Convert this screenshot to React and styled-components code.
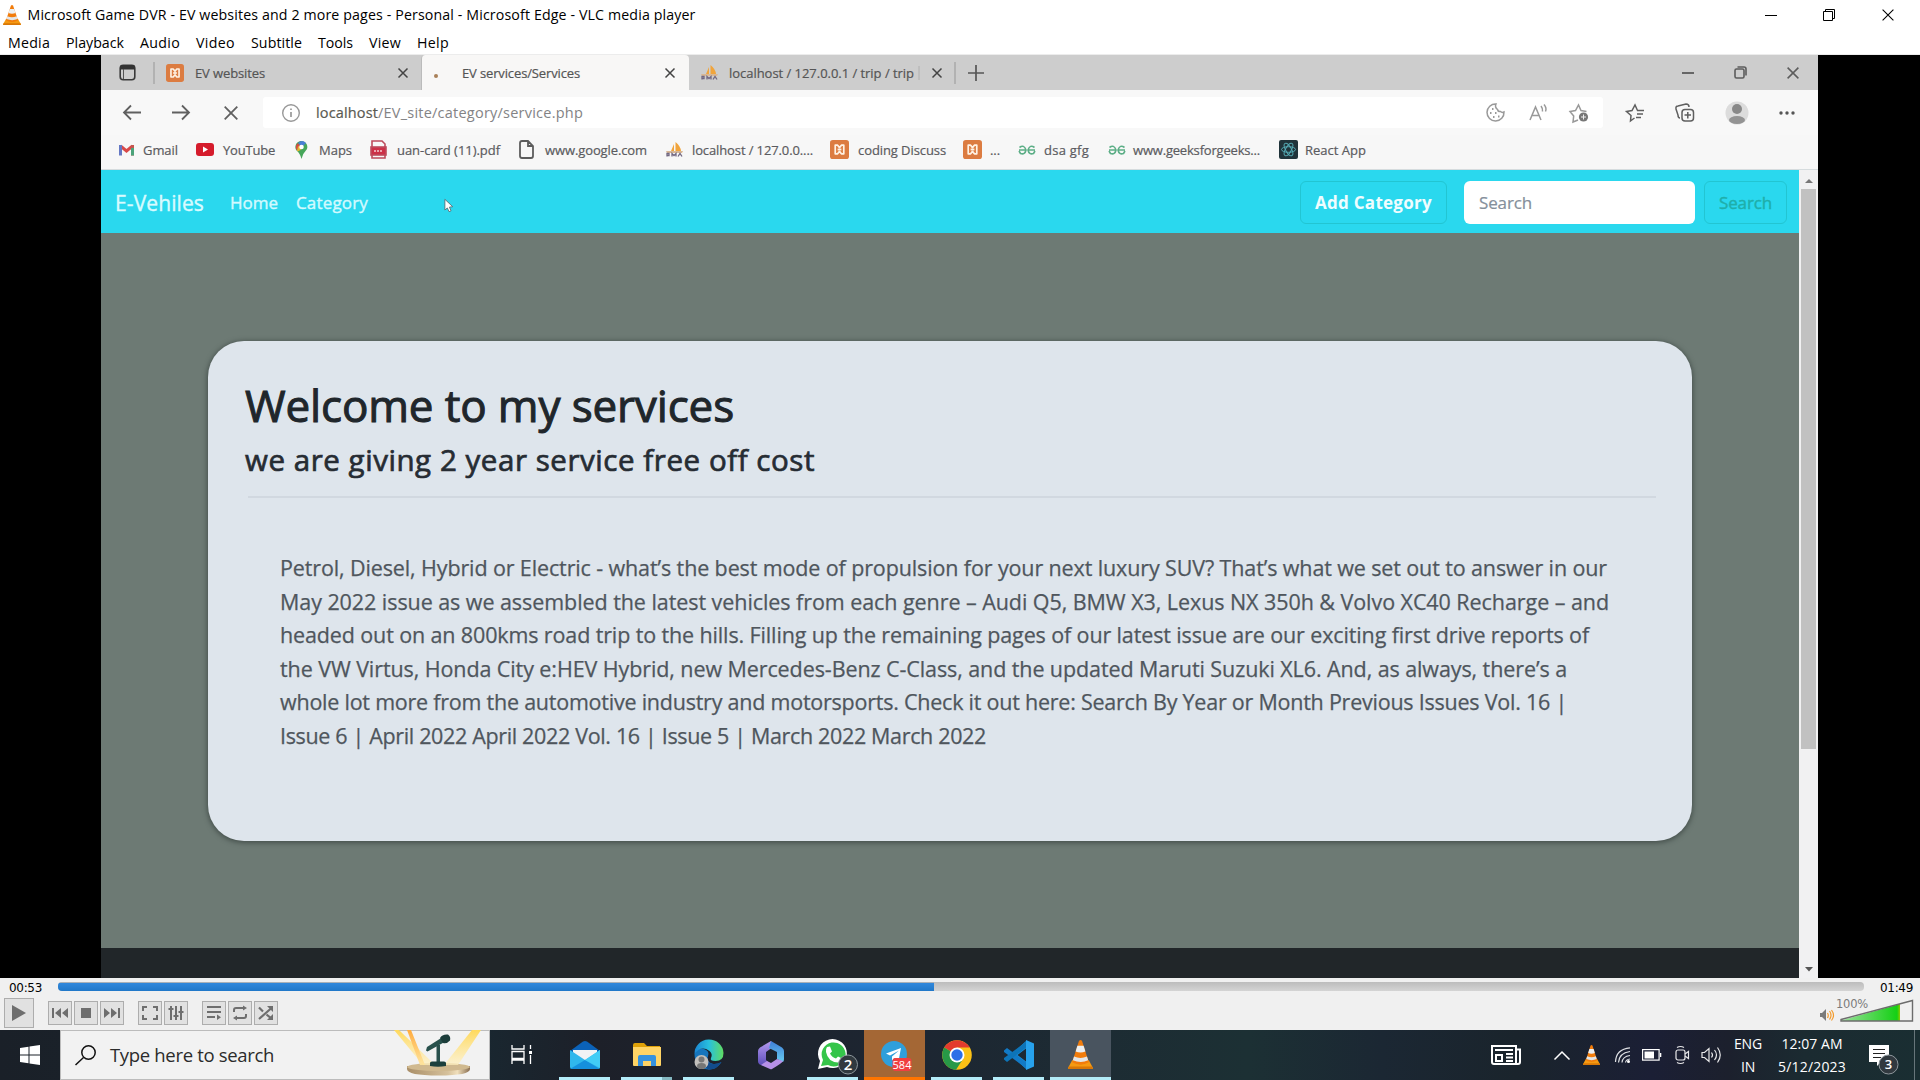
import React, { useLayoutEffect, useRef, useState } from "react";
import styled, { createGlobalStyle } from "styled-components";

const GlobalStyle = createGlobalStyle`
  * { box-sizing: border-box; }
  body { margin: 0; background: #000; font-family: "Open Sans", "Noto Sans", sans-serif; }
  svg { display: block; overflow: visible; flex: none; }
`;

/* ---------- shared parts ---------- */

const Label = styled.span`
  display: block;
  flex: none;
  width: ${(p) => p.$w}px;
  font-family: ${(p) => p.$font || "inherit"};
  font-size: ${(p) => p.$size}px;
  font-weight: ${(p) => p.$weight || 400};
  line-height: ${(p) => p.$lh || "20px"};
  color: ${(p) => p.$color || "#000"};
  -webkit-text-stroke: ${(p) => p.$stroke || 0}px currentColor;
  white-space: pre;
`;

/* A single line whose tracking is adjusted so that it fills its given width. */
function Fit({ w, children, ...rest }) {
  const ref = useRef(null);
  const [tracking, setTracking] = useState(0);
  useLayoutEffect(() => {
    const el = ref.current;
    const natural = el.getBoundingClientRect().width;
    const count = el.textContent.length;
    setTracking((w - natural) / count);
  }, [w]);
  return (
    <Label $w={w} {...rest}>
      <span ref={ref} style={{ letterSpacing: `${tracking}px` }}>{children}</span>
    </Label>
  );
}

const Slot = styled.div`
  display: flex;
  align-items: center;
  flex: none;
  width: ${(p) => p.$w}px;
  height: 100%;
`;

const Spacer = styled.div`
  flex: 1;
`;

/* ---------- player window ---------- */

const Window = styled.div`
  display: flex;
  flex-direction: column;
  width: 1920px;
  height: 1080px;
  overflow: hidden;
`;

const TitleBar = styled.header`
  display: flex;
  align-items: center;
  height: 30px;
  padding-left: 3px;
  background: #fff;
`;

const MenuBar = styled.nav`
  display: flex;
  align-items: center;
  height: 25px;
  padding: 2px 0 0 8px;
  background: #fff;
  border-bottom: 1px solid #ececec;
`;

const VideoArea = styled.main`
  display: flex;
  height: 923px;
  padding: 0 102px 0 101px;
  background: #000;
`;

const Frame = styled.section`
  display: flex;
  flex-direction: column;
  width: 1717px;
  height: 923px;
  background: #f7f8f8;
`;

/* ---------- browser chrome ---------- */

const TabStrip = styled.div`
  display: flex;
  height: 35px;
  background: #cdcdcd;
`;

const TabGroup = styled.div`
  display: flex;
  align-items: center;
  flex: none;
  width: ${(p) => p.$w}px;
  padding-left: ${(p) => p.$pad}px;
  background: ${(p) => (p.$active ? "#f8f7f6" : "transparent")};
  border-left: ${(p) => (p.$active ? "1px solid #bbb" : "0")};
  border-radius: ${(p) => (p.$active ? "4px 4px 0 0" : "0")};
`;

const TabDivider = styled.div`
  width: 2px;
  height: 22px;
  background: #b2b2b2;
`;

const AddressRow = styled.div`
  display: flex;
  align-items: center;
  height: 45px;
  padding-left: 22px;
  background: #f8f8f8;
`;

const AddressField = styled.div`
  display: flex;
  align-items: center;
  width: 1340px;
  height: 31px;
  padding-left: 19px;
  border-radius: 3px;
  background: #fff;
`;

const BookmarkRow = styled.div`
  display: flex;
  align-items: center;
  height: 35px;
  padding: 0 0 5px 16px;
  background: #f7f7f7;
  border-bottom: 1px solid #d6dcde;
`;

/* ---------- web page ---------- */

const Viewport = styled.div`
  display: flex;
  height: 808px;
`;

const Page = styled.div`
  display: flex;
  flex-direction: column;
  width: 1698px;
  background: #6d7a74;
`;

const Navbar = styled.div`
  display: flex;
  align-items: center;
  height: 63px;
  padding: 2px 12px 0 14px;
  background: #2ad8ee;
`;

const OutlineButton = styled.div`
  display: flex;
  align-items: center;
  justify-content: center;
  flex: none;
  width: ${(p) => p.$w}px;
  height: 43px;
  margin-right: ${(p) => p.$mr || 0}px;
  border: 1.5px solid #22c5d2;
  border-radius: 6px;
`;

const SearchInput = styled.div`
  display: flex;
  align-items: center;
  width: 231px;
  height: 43px;
  margin-right: 9px;
  padding-left: 15px;
  border-radius: 6px;
  background: #fff;
`;

const Body = styled.div`
  height: 715px;
  padding: 108px 0 0 107px;
`;

const Card = styled.article`
  width: 1484px;
  height: 500px;
  padding: 37px 36px 0 37px;
  border-radius: 36px;
  background: #dee5ec;
  box-shadow: 0 1px 5px 1px #46514d;
`;

const Rule = styled.div`
  height: 2px;
  margin: 9px 0 53px 3px;
  background: #d1d8e0;
`;

const Copy = styled.div`
  padding-left: 35px;
`;

const PageFooter = styled.div`
  flex: 1;
  background: #212629;
`;

const ScrollTrack = styled.div`
  display: flex;
  flex-direction: column;
  align-items: center;
  width: 19px;
  height: 808px;
  padding: 7px 0 6px;
  background: #f1f1f2;
`;

const ScrollThumb = styled.div`
  width: 15px;
  height: 560px;
  margin: 6px 0 auto;
  background: #c1c1c1;
`;

/* ---------- player controls ---------- */

const SeekRow = styled.div`
  display: flex;
  align-items: center;
  height: 19px;
  padding-left: 9px;
  background: #f0f0f0;
`;

const SeekBar = styled.div`
  width: 1806px;
  height: 9px;
  margin: 0 16px 2px;
  border-radius: 4px;
  overflow: hidden;
  background: linear-gradient(#bcbcbc, #d4d4d4);
`;

const SeekFill = styled.div`
  width: 876px;
  height: 9px;
  border-top: 1px solid #a9b0b7;
  background: linear-gradient(#3088dc, #2178c8);
`;

const ControlRow = styled.div`
  display: flex;
  align-items: center;
  height: 33px;
  padding: 0 6px 1px 4px;
  background: #f0f0f0;
`;

const ControlButton = styled.div`
  display: flex;
  align-items: center;
  justify-content: center;
  width: ${(p) => p.$size || 24}px;
  height: ${(p) => p.$size || 24}px;
  margin-right: ${(p) => p.$mr || 2}px;
  border: 1px solid #adadad;
  background: #e1e1e1;
`;

const VolumeBox = styled.div`
  position: relative;
  width: 94px;
  height: 28px;
`;

const VolumeText = styled.div`
  position: absolute;
  left: 16px;
  top: -2px;
`;

/* ---------- taskbar ---------- */

const Taskbar = styled.footer`
  display: flex;
  height: 50px;
  background: linear-gradient(90deg, #1a2028 0%, #192730 25%, #1d2029 31%, #1d2632 48%, #1c3034 65%, #1b2733 72%, #1a242c 79%, #1b1f35 86%, #1c202d 90%, #1b2b31 94%, #1a2e32 100%);
`;

const StartButton = styled.div`
  display: flex;
  align-items: center;
  justify-content: center;
  width: 60px;
`;

const SearchBox = styled.div`
  display: flex;
  align-items: center;
  width: 430px;
  padding-left: 14px;
  border: 1px solid #bcbcbc;
  background: #f2f2f2;
`;

const SearchArt = styled.div`
  align-self: flex-start;
  margin-left: 122px;
`;

const TaskList = styled.div`
  display: flex;
  margin-left: 1px;
`;

const TaskButton = styled.div`
  display: flex;
  flex-direction: column;
  align-items: center;
  justify-content: space-between;
  width: ${(p) => p.$w || 62}px;
  height: 50px;
  padding-top: 10px;
  border-right: 1px solid transparent;
  background: ${(p) => p.$bg || "transparent"};
  background-clip: padding-box;
`;

const Underline = styled.div`
  width: ${(p) => p.$w || 51}px;
  height: 3px;
  background: ${(p) => p.$color || "#b3ecf9"};
  border-right: ${(p) => (p.$stack ? "10px solid #84b8c1" : "0")};
`;

const TrayStack = styled.div`
  display: flex;
  flex-direction: column;
  align-items: center;
  justify-content: space-between;
  flex: none;
  width: ${(p) => p.$w}px;
  margin-right: ${(p) => p.$mr}px;
  height: 50px;
  padding: 4px 0 3px;
`;

const ShowDesktop = styled.div`
  width: 6px;
  height: 50px;
  border-left: 1px solid #67757a;
`;

/* ---------- icons ---------- */

const Cone = ({ w, h }) => (
  <svg width={w} height={h} viewBox="0 0 24 30" preserveAspectRatio="none">
    <path d="M4 21h16l4 8q0 1-1 1H1q-1 0-1-1z" fill="#f59a12" />
    <path d="M1 27.500h22l1 1.500q0 1-1 1H1q-1 0-1-1z" fill="#d97706" />
    <path d="M10.500 1Q12-1 13.500 1L20 23q-8 5-16 0z" fill="#f27c0b" />
    <path d="M9 6h6l1.700 6q-4.700 2-9.400 0z" fill="#eceff1" />
    <path d="M5.800 17q6.200 3 12.400 0l1.200 4q-7 3.500-14.800 0z" fill="#e3e6e8" />
  </svg>
);

const Cross = ({ s, c = "#444", t = 1.5 }) => (
  <svg width={s} height={s} viewBox="0 0 10 10">
    <path d="M.5.5l9 9M9.500.5l-9 9" stroke={c} strokeWidth={(t * 10) / s} fill="none" />
  </svg>
);

const Xampp = ({ s = 19 }) => (
  <svg width={s} height={s} viewBox="0 0 20 20">
    <rect width="20" height="20" rx="3" fill="#dc7c41" />
    <path d="M5.500 5.500h2.500L10 8l2-2.500h2.500v9H12L10 12l-2 2.500H5.500z" stroke="#fff2e4" strokeWidth="1.800" strokeLinejoin="round" fill="none" />
    <path d="M8 10h4" stroke="#fff2e4" strokeWidth="2" />
  </svg>
);

const Pma = () => (
  <svg width="18" height="15" viewBox="0 0 18 15">
    <path d="M5 9L8 2v7zM9.500 9V0q5 4 5.500 9z" fill="#f0a43c" />
    <path d="M0 9h17l-1 2H1z" fill="#d8b795" />
    <path d="M1 14.500v-3h2v2H1M6 14.500v-3l2 2 2-2v3M12 14.500l2-3 2 3" stroke="#716781" strokeWidth="1.300" fill="none" />
  </svg>
);

const Gfg = () => (
  <svg width="18" height="10" viewBox="0 0 18 10">
    <path d="M1 5h7M10 5h7M1.500 2.500Q6-1 8 5 7 10 2.500 8.500L1 6M16.500 2.500Q12-1 10 5q1 5 5.500 3.500L17 6" stroke="#5cae86" strokeWidth="1.600" fill="none" />
  </svg>
);

const Star = ({ c, children }) => (
  <svg width="20" height="20" viewBox="0 0 20 20" fill="none" stroke={c} strokeWidth="1.500">
    {children}
  </svg>
);

const Play = () => (
  <svg width="14" height="16" viewBox="0 0 14 16"><path d="M0 0l14 8-14 8z" fill="#6e6e6e" /></svg>
);

const tabs = "#555";

/* ---------- content ---------- */

const menus = [
  ["Media", 42, 58], ["Playback", 58, 74], ["Audio", 40, 56], ["Video", 39, 55],
  ["Subtitle", 51, 67], ["Tools", 35, 51], ["View", 32, 48], ["Help", 32, 32],
];

const lines = [
  ["Petrol, Diesel, Hybrid or Electric - what’s the best mode of propulsion for your next luxury SUV? That’s what we set out to answer in our", 1327],
  ["May 2022 issue as we assembled the latest vehicles from each genre – Audi Q5, BMW X3, Lexus NX 350h & Volvo XC40 Recharge – and", 1329],
  ["headed out on an 800kms road trip to the hills. Filling up the remaining pages of our latest issue are our exciting first drive reports of", 1309],
  ["the VW Virtus, Honda City e:HEV Hybrid, new Mercedes-Benz C-Class, and the updated Maruti Suzuki XL6. And, as always, there’s a", 1287],
  ["whole lot more from the automotive industry and motorsports. Check it out here: Search By Year or Month Previous Issues Vol. 16 |", 1287],
  ["Issue 6 | April 2022 April 2022 Vol. 16 | Issue 5 | March 2022 March 2022", 706],
];

function Bookmark({ icon, iconW, text, w, total }) {
  return (
    <Slot $w={total}>
      <Slot $w={iconW}>{icon}</Slot>
      <Fit w={w} $size={13} $stroke={0.2} $color="#5b5b60">{text}</Fit>
    </Slot>
  );
}

function BrowserTop() {
  return (
    <>
      <TabStrip>
        <TabGroup $w={320} $pad={18}>
          <Slot $w={34}>
            <svg width="17" height="17" viewBox="0 0 17 17">
              <rect x="1.200" y="1.200" width="14.600" height="14.600" rx="3" fill="none" stroke="#3a3a3a" strokeWidth="1.600" />
              <path d="M1 3q0-2 2-2h11q2 0 2 2v2.500H1z" fill="#333" />
              <path d="M4.500 5v10" stroke="#555" />
            </svg>
          </Slot>
          <Slot $w={13}><TabDivider /></Slot>
          <Slot $w={29}><Xampp s={18} /></Slot>
          <Slot $w={203}><Fit w={70} $size={13} $stroke={0.2} $color={tabs}>EV websites</Fit></Slot>
          <Cross s={10} />
        </TabGroup>
        <TabGroup $w={268} $pad={12} $active>
          <Slot $w={28}><svg width="4" height="4"><circle cx="2" cy="5" r="2" fill="#a98058" /></svg></Slot>
          <Slot $w={203}><Fit w={118} $size={13} $stroke={0.2} $color="#555">EV services/Services</Fit></Slot>
          <Cross s={10} />
        </TabGroup>
        <TabGroup $w={311} $pad={12}>
          <Slot $w={28}><Pma /></Slot>
          <Slot $w={203}>
            <Fit w={185} $size={13} $stroke={0.2} $color={tabs}>localhost / 127.0.0.1 / trip / trip</Fit>
            <svg width="8" height="14"><path d="M5 0v14" stroke="#b0b0b0" /></svg>
          </Slot>
          <Slot $w={22}><Cross s={10} /></Slot>
          <Slot $w={14}><TabDivider /></Slot>
          <svg width="16" height="16"><path d="M8 0v16M0 8h16" stroke="#555" strokeWidth="1.700" /></svg>
        </TabGroup>
        <Spacer />
        <TabGroup $w={136} $pad={0}>
          <Slot $w={52}><svg width="12" height="2"><path d="M0 1h12" stroke="#666" strokeWidth="2" /></svg></Slot>
          <Slot $w={53}>
            <svg width="13" height="13" fill="none" stroke="#5c5c5c" strokeWidth="1.600">
              <rect x="1" y="3" width="9" height="9" rx="1.500" /><path d="M3.500 1h6.500q2 0 2 2v6.500" />
            </svg>
          </Slot>
          <Cross s={12} c="#5c5c5c" />
        </TabGroup>
      </TabStrip>

      <AddressRow>
        <Slot $w={49}><svg width="18" height="15" fill="none" stroke="#606060" strokeWidth="1.800"><path d="M18 7.500H1M8 .5l-7 7 7 7" /></svg></Slot>
        <Slot $w={52}><svg width="18" height="15" fill="none" stroke="#606060" strokeWidth="1.800"><path d="M0 7.500h17M10 .5l7 7-7 7" /></svg></Slot>
        <Slot $w={39}><Cross s={14} c="#606060" t={1.800} /></Slot>
        <AddressField>
          <Slot $w={34}>
            <svg width="18" height="18" fill="none" stroke="#999" strokeWidth="1.400"><circle cx="9" cy="9" r="8.300" /><path d="M9 8v5M9 4.500V6" strokeWidth="1.700" /></svg>
          </Slot>
          <Fit w={62} $size={14.500} $stroke={0.2} $color="#5a5a52">localhost</Fit>
          <Fit w={205} $size={14.500} $color="#838385">/EV_site/category/service.php</Fit>
          <Spacer />
          <Slot $w={43}>
            <svg width="19" height="19" viewBox="0 0 19 19" fill="none" stroke="#999" strokeWidth="1.500">
              <path d="M10 1a8.500 8.500 0 1 0 8 8q-2 1-3.500-.5-2.500.5-3-2Q8.500 4 10 1z" />
              <path d="M6 6h1.500M4 10h1.500M9 10h1.500M7 14h1.500M12 13.500h1.500" strokeWidth="2" />
            </svg>
          </Slot>
          <Slot $w={40}>
            <svg width="19" height="17" fill="none" stroke="#999" strokeWidth="1.500"><path d="M1 16L6.500 3 12 16M3 11.500h7M12 2q2 2.500 1.500 5.500M15 .5q3 3.500 1.500 7" /></svg>
          </Slot>
          <Slot $w={34}>
            <Star c="#999"><path d="M9 17l-5 2 .7-6L1 8.500l5.500-1L9.500 2 12 7.500l5.500 1" /><circle cx="14.500" cy="14" r="4.600" fill="#777" stroke="none" /><path d="M12 14h5M14.500 11.500v5" stroke="#eee" strokeWidth="1" /></Star>
          </Slot>
        </AddressField>
        <Slot $w={22} />
        <Slot $w={50}>
          <Star c="#5f5f5f"><path d="M9.500 15l-4 3 .5-5.500L1.500 8.500l5.500-1 3-5.500 2.500 5.500M12 7.500h7M12 11h6M11 14.500h5" /></Star>
        </Slot>
        <Slot $w={50}>
          <svg width="20" height="20" fill="none" stroke="#5f5f5f" strokeWidth="1.500"><path d="M5 15q-2 0-2-3L1 6q-.5-3 2-3l8-2q3 0 3 3" /><rect x="7" y="6.500" width="11.500" height="11.500" rx="3" /><path d="M9.500 12h6.500M12.800 9v6.500" /></svg>
        </Slot>
        <Slot $w={54}>
          <svg width="24" height="24"><circle cx="12" cy="12" r="11.500" fill="#dcdcdc" /><circle cx="12" cy="8" r="5" fill="#888" /><ellipse cx="12" cy="19" rx="8" ry="4" fill="#939393" /></svg>
        </Slot>
        <svg width="17" height="4" fill="#555"><circle cx="2" cy="2" r="1.700" /><circle cx="8" cy="2" r="1.700" /><circle cx="14" cy="2" r="1.700" /></svg>
      </AddressRow>

      <BookmarkRow>
        <Bookmark total={79} iconW={26} w={35} text="Gmail" icon={
          <svg width="18" height="13" fill="none" strokeWidth="3"><path d="M3.500 3L9.500 8l6-5" stroke="#d94848" /><path d="M3.500 12.500V2" stroke="#6478c4" /><path d="M15.500 12.500V2" stroke="#c4564e" /><path d="M15.500 12.500V5" stroke="#4ba37a" /></svg>} />
        <Bookmark total={99} iconW={27} w={52} text="YouTube" icon={
          <svg width="18" height="13"><rect width="18" height="13" rx="3" fill="#d51c2c" /><path d="M7 3.500l5 3-5 3z" fill="#fff" /></svg>} />
        <Bookmark total={75} iconW={24} w={33} text="Maps" icon={
          <svg width="13" height="18"><path d="M6.500 18Q5 12 1.500 9.500A6 6 0 1 1 12 8Q8 12 6.500 18z" fill="#46a65a" /><path d="M1.500 9A6 6 0 0 1 3 2l3 4z" fill="#d74b3f" /><path d="M3 2q4-4 8 0L7 6z" fill="#4a7fd5" /><path d="M2 10q3 1 5-3l-4-2z" fill="#e5b534" /><circle cx="6.500" cy="6" r="2.300" fill="#fff" /></svg>} />
        <Bookmark total={149} iconW={27} w={103} text="uan-card (11).pdf" icon={
          <svg width="17" height="19" fill="none" stroke="#bd4b5c" strokeWidth="1.600"><path d="M2 7V1h10l3 3v3M2 15v3h13v-3" /><rect x="1" y="7" width="15" height="8" fill="#cc3047" /><path d="M4 11h9" stroke="#eba4ae" strokeWidth="2" strokeDasharray="2 1" /></svg>} />
        <Bookmark total={147} iconW={26} w={102} text="www.google.com" icon={
          <svg width="15" height="19" fill="none" stroke="#5c5c5c" strokeWidth="1.800"><path d="M3 1h6l5 5v10q0 2-2 2H3q-2 0-2-2V3q0-2 2-2zM9 1v5h5" /></svg>} />
        <Bookmark total={164} iconW={26} w={121} text="localhost / 127.0.0...." icon={<Pma />} />
        <Bookmark total={133} iconW={28} w={88} text="coding Discuss" icon={<Xampp />} />
        <Bookmark total={55} iconW={27} w={10} text="..." icon={<Xampp />} />
        <Bookmark total={90} iconW={26} w={45} text="dsa gfg" icon={<Gfg />} />
        <Bookmark total={171} iconW={25} w={127} text="www.geeksforgeeks..." icon={<Gfg />} />
        <Bookmark total={100} iconW={26} w={61} text="React App" icon={
          <svg width="19" height="19" fill="none" stroke="#55aab4" strokeWidth="1"><rect width="19" height="19" rx="2" fill="#20333a" stroke="none" /><ellipse cx="9.500" cy="9.500" rx="7" ry="2.800" /><ellipse cx="9.500" cy="9.500" rx="7" ry="2.800" transform="rotate(60 9.500 9.500)" /><ellipse cx="9.500" cy="9.500" rx="7" ry="2.800" transform="rotate(120 9.500 9.500)" /></svg>} />
      </BookmarkRow>
    </>
  );
}

function WebPage() {
  return (
    <Viewport>
      <Page>
        <Navbar>
          <Slot $w={115}><Fit w={89} $size={21} $stroke={0.4} $color="#d8fbff">E-Vehiles</Fit></Slot>
          <Slot $w={66}><Fit w={48} $size={17} $stroke={0.4} $color="#d3faff">Home</Fit></Slot>
          <Slot $w={147}><Fit w={72} $size={17} $stroke={0.4} $color="#d3faff">Category</Fit></Slot>
          <svg width="12" height="14" viewBox="0 -3 12 17"><path d="M1 1v13l3-2.500 2 4.500 2.500-1-2-4.500 4-.5z" fill="#fff" stroke="#56656b" /></svg>
          <Spacer />
          <OutlineButton $w={147} $mr={17}><Fit w={117} $size={17} $weight={700} $color="#effdff">Add Category</Fit></OutlineButton>
          <SearchInput><Fit w={53} $size={17} $stroke={0.2} $color="#858f9b">Search</Fit></SearchInput>
          <OutlineButton $w={83}><Fit w={53} $size={17} $stroke={0.4} $color="#1faeaa">Search</Fit></OutlineButton>
        </Navbar>
        <Body>
          <Card>
            <Fit w={489} $size={44} $lh="54px" $stroke={1} $color="#20262b">Welcome to my services</Fit>
            <Fit w={570} $size={29.500} $lh="55px" $stroke={0.7} $color="#262c33">we are giving 2 year service free off cost</Fit>
            <Rule />
            <Copy>
              {lines.map(([t, w]) => (
                <Fit key={t} w={w} $size={21.500} $lh="33.600px" $stroke={0.25} $color="#4f565d">{t}</Fit>
              ))}
            </Copy>
          </Card>
        </Body>
        <PageFooter />
      </Page>
      <ScrollTrack>
        <svg width="8" height="6"><path d="M0 6l4-4 4 4z" fill="#777" /></svg>
        <ScrollThumb />
        <svg width="8" height="5"><path d="M0 0h8L4 4.500z" fill="#555" /></svg>
      </ScrollTrack>
    </Viewport>
  );
}

const glyph = { width: 18, height: 14, viewBox: "0 0 18 14", fill: "#6e6e6e" };

function Controls() {
  const tahoma = '"DejaVu Sans", sans-serif';
  return (
    <>
      <SeekRow>
        <Fit w={33} $size={12} $font={tahoma}>00:53</Fit>
        <SeekBar><SeekFill /></SeekBar>
        <Fit w={33} $size={12} $font={tahoma}>01:49</Fit>
      </SeekRow>
      <ControlRow>
        <ControlButton $size={30} $mr={14}><Play /></ControlButton>
        <ControlButton><svg {...glyph}><path d="M1 2h2v10H1zM10 2v10L4 7zM17 2v10l-6-5z" /></svg></ControlButton>
        <ControlButton><svg {...glyph}><path d="M4 2h10v10H4z" /></svg></ControlButton>
        <ControlButton $mr={14}><svg {...glyph}><path d="M15 2h2v10h-2zM8 2v10l6-5zM1 2v10l6-5z" /></svg></ControlButton>
        <ControlButton><svg {...glyph} fill="none" stroke="#6e6e6e" strokeWidth="2"><path d="M2 5V1h4M12 1h4v4M16 9v4h-4M6 13H2V9" /></svg></ControlButton>
        <ControlButton $mr={14}><svg {...glyph} fill="none" stroke="#6e6e6e" strokeWidth="2"><path d="M4 0v14M9 0v14M14 0v14M1.500 3h5M6.500 10h5M11.500 6h5" /></svg></ControlButton>
        <ControlButton><svg {...glyph}><path d="M2 0h14v2H2zM2 5h14v2H2zM2 10h8v2H2zM12 8.500l4 2.800-4 2.700z" /></svg></ControlButton>
        <ControlButton><svg {...glyph} fill="none" stroke="#6e6e6e" strokeWidth="2"><path d="M3 6V4q0-2 2-2h8M15 8v2q0 2-2 2H5" /><path d="M12-.5L16 2l-4 2.500zM6 9.500L2 12l4 2.500z" fill="#6e6e6e" stroke="none" /></svg></ControlButton>
        <ControlButton><svg {...glyph} fill="none" stroke="#6e6e6e" strokeWidth="2.200"><path d="M2 1.500l4 4M9.500 8.500L15 13M2 13L14.500 2" /><path d="M10 0h6v6zM16 8v6h-6z" fill="#6e6e6e" stroke="none" /></svg></ControlButton>
        <Spacer />
        <VolumeBox>
          <svg width="94" height="28">
            <defs><linearGradient id="vol"><stop offset="0" stopColor="#9be09b" /><stop offset="0.950" stopColor="#14d014" /><stop offset="1" stopColor="#8ccb00" /></linearGradient></defs>
            <path d="M0 15h2l4-4v12l-4-4H0z" fill="#7a7a7a" transform="translate(0 -1)" />
            <path d="M7.500 14q1.500 2.500 0 5M9.500 12q3 4 0 8.500M11.500 11q4 5.500 0 10.500" fill="none" stroke="#f39a2b" strokeWidth="1.200" />
            <path d="M21 21.500L80 5v17H21z" fill="url(#vol)" />
            <path d="M21 20.500L92.500 1.500V22H21z" fill="none" stroke="#6c6c6c" strokeWidth="1.400" />
          </svg>
          <VolumeText><Fit w={32} $size={11.500} $lh="14px" $color="#7b7b7b" $font={tahoma}>100%</Fit></VolumeText>
        </VolumeBox>
      </ControlRow>
    </>
  );
}

const Badge = ({ x, y, r, text, size }) => (
  <g>
    <circle cx={x} cy={y} r={r} fill="#31393f" stroke="#8e979c" />
    <text x={x} y={y + size * 0.36} fontSize={size} fontWeight="600" fill="#fff" textAnchor="middle" fontFamily="Open Sans">{text}</text>
  </g>
);

function TaskbarRow() {
  return (
    <Taskbar>
      <StartButton>
        <svg width="20" height="20" fill="#fff"><path d="M0 3l8.500-1.200v7.700H0zM9.500 1.600L20 0v9.500H9.500zM0 10.500h8.500v7.700L0 17zM9.500 10.500H20V20L9.500 18.400z" /></svg>
      </StartButton>
      <SearchBox>
        <Slot $w={35}><svg width="21" height="21" fill="none" stroke="#111" strokeWidth="1.500"><circle cx="13.500" cy="7.500" r="6.700" /><path d="M8.500 12.500L.5 20" /></svg></Slot>
        <Fit w={164} $size={18.500} $lh="24px" $color="#2b2b2b">Type here to search</Fit>
        <SearchArt>
          <svg width="94" height="48" viewBox="0 0 94 48">
            <defs>
              <linearGradient id="beam" x1="0" y1="0" x2="0" y2="1"><stop offset="0" stopColor="#ffd95c" /><stop offset="1" stopColor="#fff0c0" stopOpacity="0.700" /></linearGradient>
              <linearGradient id="beam2" x1="0" y1="0" x2="0" y2="1"><stop offset="0" stopColor="#ffab3d" /><stop offset="1" stopColor="#ffe49a" stopOpacity="0.900" /></linearGradient>
              <linearGradient id="stage"><stop offset="0" stopColor="#a98e68" /><stop offset="0.650" stopColor="#d6c19c" /><stop offset="0.800" stopColor="#f0dfbc" /><stop offset="1" stopColor="#876c50" /></linearGradient>
            </defs>
            <path d="M11 38v-3h63v3q0 6.500-31.500 6.500T11 38z" fill="url(#stage)" />
            <ellipse cx="42.500" cy="36" rx="31.500" ry="4" fill="#d0b98f" />
            <path d="M-2-1h5l36 35H27z" fill="url(#beam)" /><path d="M11-1h4l14 35h-5z" fill="url(#beam2)" /><path d="M76-1h9L62 34H48z" fill="url(#beam)" />
            <path d="M40.500 14h3.500v19h-3.500z" fill="#29504d" /><path d="M34 32q0-1.500 2-1.500h12q2 0 2 1.500v3q-8 1.500-16 0z" fill="#1c403d" />
            <path d="M30 19.500l1-3.500L46 6.500l3.500 4-18 10z" fill="#28514c" /><path d="M44 7q2-4 8-3.500 3 2 2 6-3 3.500-7 2.500z" fill="#1c3d3a" />
          </svg>
        </SearchArt>
      </SearchBox>

      <TaskList>
        <TaskButton $w={63}>
          <svg width="21" height="30" fill="none" stroke="#fff" strokeWidth="1.300"><path d="M0 5v4h12V5M0 24v-4h12v4M0 11.500h12v7H0zM18.500 5v4M18.500 15v9" /><path d="M17 11h3v3h-3z" fill="#fff" stroke="none" /></svg>
        </TaskButton>
        <TaskButton>
          <svg width="30" height="30"><path d="M0 11L13 1.500q2-1 4 0L30 11v3H0z" fill="#0b62b8" /><path d="M3 10h24v9L15 24 3 19z" fill="#f1f3f5" /><path d="M0 10l15 10 15-10v17q0 2-2 2H2q-2 0-2-2z" fill="#30b7ec" /><path d="M0 29l15-9 15 9z" fill="#1590dd" /><path d="M15 20L30 10v18z" fill="#42cdf6" /></svg>
          <Underline />
        </TaskButton>
        <TaskButton>
          <svg width="28" height="30"><path d="M0 5q0-2 2-2h9l3 3h13v8H0z" fill="#dfa108" /><path d="M0 7h28v18q0 1-1 1H1q-1 0-1-1z" fill="#ffd465" /><path d="M5 26V17q0-2 2-2h14q2 0 2 2v9h-5v-5h-8v5z" fill="#3592de" /></svg>
          <Underline $stack />
        </TaskButton>
        <TaskButton>
          <svg width="30" height="30">
            <defs><linearGradient id="edge"><stop offset="0" stopColor="#1a84d1" /><stop offset="0.500" stopColor="#28c0de" /><stop offset="1" stopColor="#60dc61" /></linearGradient></defs>
            <path d="M.5 14Q3 7 10 9q6 2 4 7-2 6 5 8 5 .5 8.500-2-5 8-13 7.500Q.5 28 .5 14z" fill="#1675bd" />
            <path d="M.5 14A14.500 14 0 0 1 29.500 13q0 8-8 8-6 0-4.500-3 2-4-1.500-7Q7 5 .5 14z" fill="url(#edge)" />
            <path d="M14 17Q13 24 20 24q4 0 7.500-2-5 8-13 7.500-6-3-5-8 1-5 4.500-4.500z" fill="#124c8c" /><circle cx="7.500" cy="22" r="7" fill="#c2c0bd" /><circle cx="7.500" cy="19.500" r="3" fill="#777" /><path d="M3 26q0-3 4.500-3t4.500 3-4.500 3-4.500-3z" fill="#777" />
          </svg>
          <Underline />
        </TaskButton>
        <TaskButton>
          <svg width="26" height="30">
            <defs><linearGradient id="office" x1="0" x2="0" y1="0" y2="1"><stop offset="0" stopColor="#b49af0" /><stop offset="1" stopColor="#5b4cb8" /></linearGradient><linearGradient id="office2" x1="0" x2="0" y1="0" y2="1"><stop offset="0" stopColor="#3f7fd8" /><stop offset="1" stopColor="#67cbf0" /></linearGradient></defs>
            <path d="M13 1L2 7.500Q0 9 0 11v10q0 3 3 4l2 1 6-3-3-3v-8l7-5z" fill="url(#office)" /><path d="M13 1l-2 7 8 4v7l6 3q1-1 1-3V11q0-2-2-3.500z" fill="url(#office2)" /><path d="M25 21q0 1.500-11 8-1 .5-2 0L3 25l6-4 4 2 6-4z" fill="#b690e7" />
          </svg>
        </TaskButton>
        <TaskButton>
          <svg width="30" height="30"><path d="M0 29l2-8A14.500 14.500 0 1 1 9 27z" fill="#fff" /><path d="M3 26l2-6A12 12 0 1 1 10 25z" fill="#35c54a" /><path d="M9 7l3-.5 2 5-2 2q2 4 6 5l2-2 4 2q0 4-4 4Q10 22 8 12q-.5-3 1-5z" fill="#fff" /><Badge x={30} y={24.500} r={9.500} text="2" size={15} /></svg>
          <Underline />
        </TaskButton>
        <TaskButton $bg="#a46735">
          <svg width="27" height="30"><circle cx="13" cy="14" r="13" fill="#2f9fdb" /><path d="M5 13.500L20 8l-2.500 13-4-3-2.500 2.500v-4l7-6-9 5z" fill="#fff" /><rect x="11.500" y="18" width="19" height="13" rx="3" fill="#f03f40" /><text x="21" y="28.500" fontSize="11" fill="#fff" textAnchor="middle" fontFamily="Open Sans">584</text></svg>
          <Underline $w={61} $color="#ff7500" />
        </TaskButton>
        <TaskButton>
          <svg width="30" height="30"><circle cx="15" cy="15" r="14.800" fill="#fbc116" /><path d="M15 15L2.200 7.600A14.800 14.800 0 0 1 27.800 7.600H15z" fill="#e33b2e" /><path d="M2.200 7.600A14.800 14.800 0 0 0 14 29.800L21 19l-6-4z" fill="#279847" /><circle cx="15" cy="15" r="7.500" fill="#fff" /><circle cx="15" cy="15" r="5.700" fill="#2c6fe8" /></svg>
          <Underline />
        </TaskButton>
        <TaskButton>
          <svg width="30" height="30"><path d="M22 1L7 15 22 29v-7.500L13.500 15 22 8.500z" fill="#168fdc" /><path d="M0 10.500l3-2.500L23 23v6L0 12z" fill="#127ac6" /><path d="M0 19.500L3 22 23 7V1L0 18z" fill="#0d74b8" /><path d="M22 0l8 3.500v23L22 30z" fill="#27a2ec" /></svg>
          <Underline />
        </TaskButton>
        <TaskButton $bg="#49545f">
          <Cone w={25} h={29} />
          <Underline $w={61} />
        </TaskButton>
      </TaskList>

      <Spacer />
      <Slot $w={63}>
        <svg width="30" height="20" fill="none" stroke="#fff" strokeWidth="2"><path d="M1 1h24v18H3q-2 0-2-2zM25 4.500h4V17q0 2-2 2h-3M4 5h18M15 9h7M15 12.500h7M15 16h7" /><path d="M5 10h6v6H5z" /></svg>
      </Slot>
      <Slot $w={29}><svg width="16" height="9" fill="none" stroke="#fff" strokeWidth="1.500"><path d="M.5 8.500L8 1l7.500 7.500" /></svg></Slot>
      <Slot $w={32}><Cone w={17} h={20} /></Slot>
      <Slot $w={27}>
        <svg width="16" height="16" fill="none" stroke="#dfe1e5" strokeWidth="1.200"><path d="M.5 15Q1 2 15 .8M3.500 15.500Q4 6 15 4.500M7 15.500Q7.500 9.500 15 8.500M10.500 15.500q.5-3 4.500-3.500" /><circle cx="13.500" cy="14.500" r="1.500" fill="#fff" stroke="none" /></svg>
      </Slot>
      <Slot $w={33}><svg width="19" height="12"><rect x=".6" y=".6" width="16.500" height="10.500" fill="none" stroke="#fff" strokeWidth="1.200" /><path d="M2.500 2.500h9.500v7H2.500zM18 4h1.300v4H18z" fill="#fff" /></svg></Slot>
      <Slot $w={26}><svg width="15" height="18" fill="none" stroke="#e8e8ea" strokeWidth="1.200"><rect x="1" y="4" width="9" height="10" rx="2" /><path d="M10 8l3.500-2.500v7L10 10M2 1.500q3.500-2 7 0M2 16.500q3.500 2 7 0" /></svg></Slot>
      <Slot $w={33}><svg width="21" height="18" fill="none" stroke="#e8e8ea" strokeWidth="1.200"><path d="M1 6.500h2.500L8 2.500v13l-4.500-4H1zM10.500 6.500q2 2.500 0 5M13.500 4q4 5 0 10M16.500 1.500q5.500 7.500 0 15" /></svg></Slot>
      <TrayStack $w={28} $mr={16}>
        <Fit w={28} $size={14} $color="#fff">ENG</Fit>
        <Fit w={14} $size={14} $color="#fff">IN</Fit>
      </TrayStack>
      <TrayStack $w={68} $mr={23}>
        <Fit w={61} $size={14} $color="#fff">12:07 AM</Fit>
        <Fit w={68} $size={14} $color="#fff">5/12/2023</Fit>
      </TrayStack>
      <Slot $w={45}>
        <svg width="30" height="30"><path d="M0 5h20v17h-8l-4 4v-4H0z" fill="#fff" /><path d="M4 9.500h12M4 13.500h12M4 17.500h8" stroke="#222" strokeWidth="1.200" /><Badge x={19.500} y={24.500} r={9.500} text="3" size={13} /></svg>
      </Slot>
      <ShowDesktop />
    </Taskbar>
  );
}

export default function App() {
  return (
    <Window>
      <GlobalStyle />
      <TitleBar>
        <Slot $w={24.500}><Cone w={18} h={20} /></Slot>
        <Fit w={668} $size={14.200}>Microsoft Game DVR - EV websites and 2 more pages - Personal - Microsoft Edge - VLC media player</Fit>
        <Spacer />
        <Slot $w={58}><svg width="12" height="1"><path d="M0 0h12v1H0z" /></svg></Slot>
        <Slot $w={59}><svg width="12" height="12" fill="none" stroke="#000"><path d="M.5 2.500h9v9h-9zM2.500 2.500v-2h9v9h-2" /></svg></Slot>
        <Slot $w={38}><Cross s={12} c="#000" t={1.100} /></Slot>
      </TitleBar>
      <MenuBar>
        {menus.map(([t, w, total]) => (
          <Slot key={t} $w={total}><Fit w={w} $size={14.200}>{t}</Fit></Slot>
        ))}
      </MenuBar>
      <VideoArea>
        <Frame>
          <BrowserTop />
          <WebPage />
        </Frame>
      </VideoArea>
      <Controls />
      <TaskbarRow />
    </Window>
  );
}
